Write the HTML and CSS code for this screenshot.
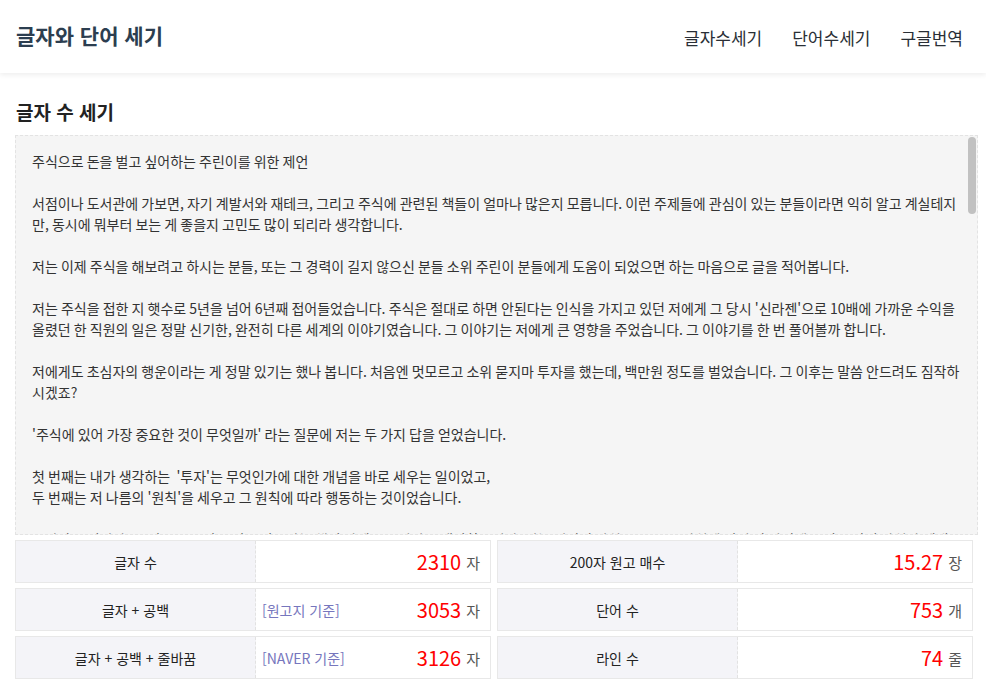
FILE: index.html
```html
<!DOCTYPE html>
<html lang="ko">
<head>
<meta charset="utf-8">
<title>글자와 단어 세기</title>
<link rel="stylesheet" href="styles.css">
</head>
<body>
<header class="topbar">
  <h1 class="brand">글자와 단어 세기</h1>
  <nav class="nav">
    <a class="nav-link" href="#">글자수세기</a>
    <a class="nav-link" href="#">단어수세기</a>
    <a class="nav-link" href="#">구글번역</a>
  </nav>
</header>
<main class="main">
  <h2 class="section-title">글자 수 세기</h2>
  <div class="editor-wrap">
  <textarea class="editor" spellcheck="false">주식으로 돈을 벌고 싶어하는 주린이를 위한 제언

서점이나 도서관에 가보면, 자기 계발서와 재테크, 그리고 주식에 관련된 책들이 얼마나 많은지 모릅니다. 이런 주제들에 관심이 있는 분들이라면 익히 알고 계실테지만, 동시에 뭐부터 보는 게 좋을지 고민도 많이 되리라 생각합니다.

저는 이제 주식을 해보려고 하시는 분들, 또는 그 경력이 길지 않으신 분들 소위 주린이 분들에게 도움이 되었으면 하는 마음으로 글을 적어봅니다.

저는 주식을 접한 지 햇수로 5년을 넘어 6년째 접어들었습니다. 주식은 절대로 하면 안된다는 인식을 가지고 있던 저에게 그 당시 '신라젠'으로 10배에 가까운 수익을 올렸던 한 직원의 일은 정말 신기한, 완전히 다른 세계의 이야기였습니다. 그 이야기는 저에게 큰 영향을 주었습니다. 그 이야기를 한 번 풀어볼까 합니다.

저에게도 초심자의 행운이라는 게 정말 있기는 했나 봅니다. 처음엔 멋모르고 소위 묻지마 투자를 했는데, 백만원 정도를 벌었습니다. 그 이후는 말씀 안드려도 짐작하시겠죠?

'주식에 있어 가장 중요한 것이 무엇일까' 라는 질문에 저는 두 가지 답을 얻었습니다.

첫 번째는 내가 생각하는  '투자'는 무엇인가에 대한 개념을 바로 세우는 일이었고,
두 번째는 저 나름의 '원칙'을 세우고 그 원칙에 따라 행동하는 것이었습니다.

투자란 무엇일까요? 많은 분들이 주식을 사고파는 행위 자체를 투자라고 생각하시지만, 저는 기업의 가치를 보고 그 가치에 비해 싼 가격에 주식을 사서 가치가 제대로 평가받을 때까지 기다리는 것이 투자라고 생각합니다.

원칙이 없는 투자는 나침반 없이 바다를 항해하는 것과 같습니다. 시장이 요동칠 때마다 마음이 흔들리고, 남들의 말 한마디에 매수와 매도를 반복하게 됩니다.</textarea>
  <span class="scroll-thumb"></span>
  </div>
  <section class="stats">
    <div class="stat">
      <div class="stat-label">글자 수</div>
      <div class="stat-value"><span class="num">2310</span><span class="unit">자</span></div>
    </div>
    <div class="stat">
      <div class="stat-label">200자 원고 매수</div>
      <div class="stat-value"><span class="num">15.27</span><span class="unit">장</span></div>
    </div>
    <div class="stat">
      <div class="stat-label">글자 + 공백</div>
      <div class="stat-value"><span class="note">[원고지 기준]</span><span class="num">3053</span><span class="unit">자</span></div>
    </div>
    <div class="stat">
      <div class="stat-label">단어 수</div>
      <div class="stat-value"><span class="num">753</span><span class="unit">개</span></div>
    </div>
    <div class="stat">
      <div class="stat-label">글자 + 공백 + 줄바꿈</div>
      <div class="stat-value"><span class="note">[NAVER 기준]</span><span class="num">3126</span><span class="unit">자</span></div>
    </div>
    <div class="stat">
      <div class="stat-label">라인 수</div>
      <div class="stat-value"><span class="num">74</span><span class="unit">줄</span></div>
    </div>
  </section>
</main>
</body>
</html>
```

FILE: styles.css
```css
* {
  box-sizing: border-box;
}

html, body {
  margin: 0;
  padding: 0;
  background: #ffffff;
}

body {
  font-family: "Noto Sans CJK KR", "Noto Sans", sans-serif;
  color: #222222;
  font-size: 14px;
}

.topbar {
  position: relative;
  z-index: 2;
  height: 73px;
  display: flex;
  align-items: center;
  justify-content: space-between;
  padding: 0 23px 0 16px;
  background: #ffffff;
  box-shadow: 0 2px 5px rgba(0, 0, 0, 0.07);
}

.brand {
  margin: 0 0 4px 0;
  font-size: 21px;
  font-weight: 700;
  color: #2c3e50;
  line-height: 30px;
}

.nav {
  display: flex;
  gap: 30px;
  margin-top: 2px;
}

.nav-link {
  font-size: 17px;
  color: #2a2f36;
  text-decoration: none;
  line-height: 24px;
}

.main {
  padding: 0 8px 0 15px;
}

.section-title {
  margin: 25px 0 0 1px;
  font-size: 19px;
  font-weight: 700;
  line-height: 27px;
  color: #222222;
  height: 37px;
}

.editor-wrap {
  position: relative;
  width: 963px;
  height: 400px;
}

.editor {
  display: block;
  width: 100%;
  height: 100%;
  margin: 0;
  padding: 15px 14px 15px 16px;
  border: 1px dashed #e3e3e3;
  background: #f5f5f5;
  color: #333333;
  font-family: "Noto Sans CJK KR", "Noto Sans", sans-serif;
  font-size: 14px;
  line-height: 21px;
  word-spacing: -0.8px;
  resize: none;
  outline: none;
  overflow: hidden;
}

.scroll-thumb {
  position: absolute;
  top: 2px;
  right: 2px;
  width: 8px;
  height: 77px;
  border-radius: 4px;
  background: #c1c1c1;
}

.stats {
  display: grid;
  grid-template-columns: 476px 476px;
  column-gap: 6px;
  row-gap: 5px;
  margin-top: 5px;
}

.stat {
  display: flex;
  height: 43px;
  border: 1px solid #e8e8e8;
}

.stat-label {
  width: 240px;
  flex: none;
  display: flex;
  align-items: center;
  justify-content: center;
  background: #f4f4f8;
  border-right: 1px dashed #e2e2e2;
  font-size: 14px;
  color: #222222;
}

.stat-value {
  flex: 1;
  display: flex;
  align-items: center;
  padding: 0 10px 0 6px;
  background: #ffffff;
}

.note {
  font-size: 14px;
  color: #7676bd;
}

.num {
  margin-left: auto;
  font-size: 20px;
  color: #ff0000;
}

.unit {
  margin-left: 5px;
  font-size: 15px;
  color: #555555;
  margin-top: 2px;
}
```
